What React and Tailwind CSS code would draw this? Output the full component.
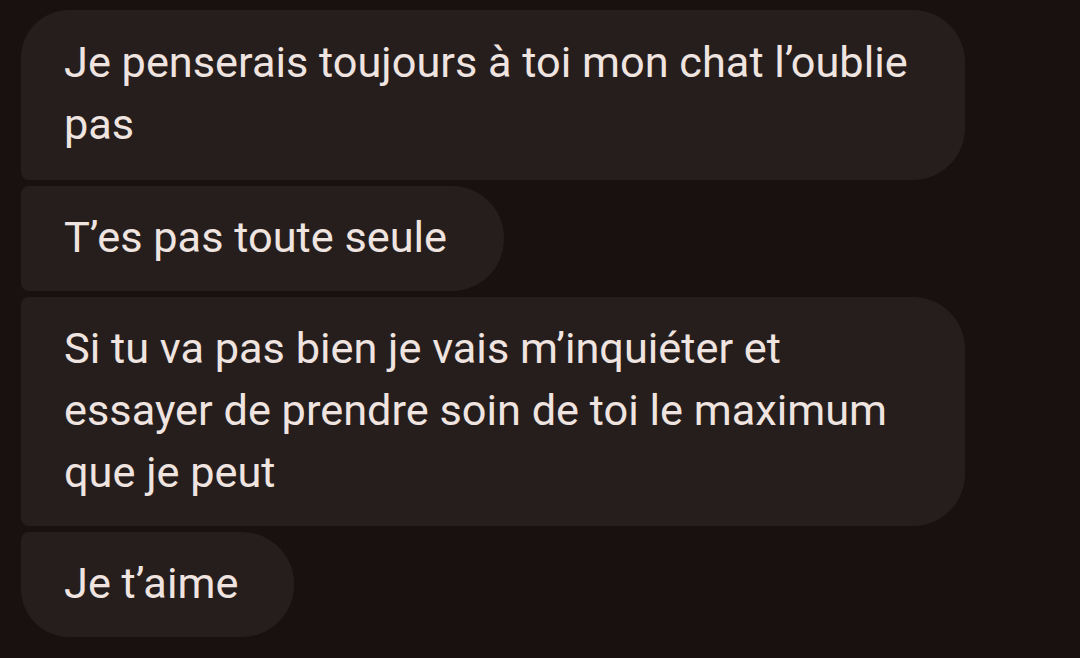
export default function App() {
  return (
    <div
      className="w-[1080px] h-[658px] overflow-hidden bg-[#19110f] pt-[10px] pl-[21px] flex flex-col items-start gap-[6px] text-[#efe4e0] text-[43.3px] leading-[62px]"
      style={{ fontFamily: "Roboto, 'Noto Sans', sans-serif" }}
    >
      <div className="w-[944px] bg-[#261e1c] rounded-tl-[48px] rounded-tr-[52px] rounded-br-[52px] rounded-bl-[8px] pl-[43px] pr-[40px] pt-[22px] pb-[24px] whitespace-nowrap">
        Je penserais toujours à toi mon chat l’oublie
        <br />
        pas
      </div>

      <div className="bg-[#261e1c] rounded-tl-[8px] rounded-bl-[8px] rounded-r-[52px] pl-[43px] pr-[57px] pt-[21px] pb-[22px] whitespace-nowrap">
        T’es pas toute seule
      </div>

      <div className="w-[944px] bg-[#261e1c] rounded-tl-[8px] rounded-bl-[8px] rounded-r-[52px] pl-[43px] pr-[40px] pt-[21px] pb-[22px] whitespace-nowrap">
        Si tu va pas bien je vais m’inquiéter et
        <br />
        essayer de prendre soin de toi le maximum
        <br />
        que je peut
      </div>

      <div className="bg-[#261e1c] rounded-tl-[8px] rounded-bl-[48px] rounded-r-[52px] pl-[43px] pr-[56px] pt-[21px] pb-[22px] whitespace-nowrap">
        Je t’aime
      </div>
    </div>
  );
}
